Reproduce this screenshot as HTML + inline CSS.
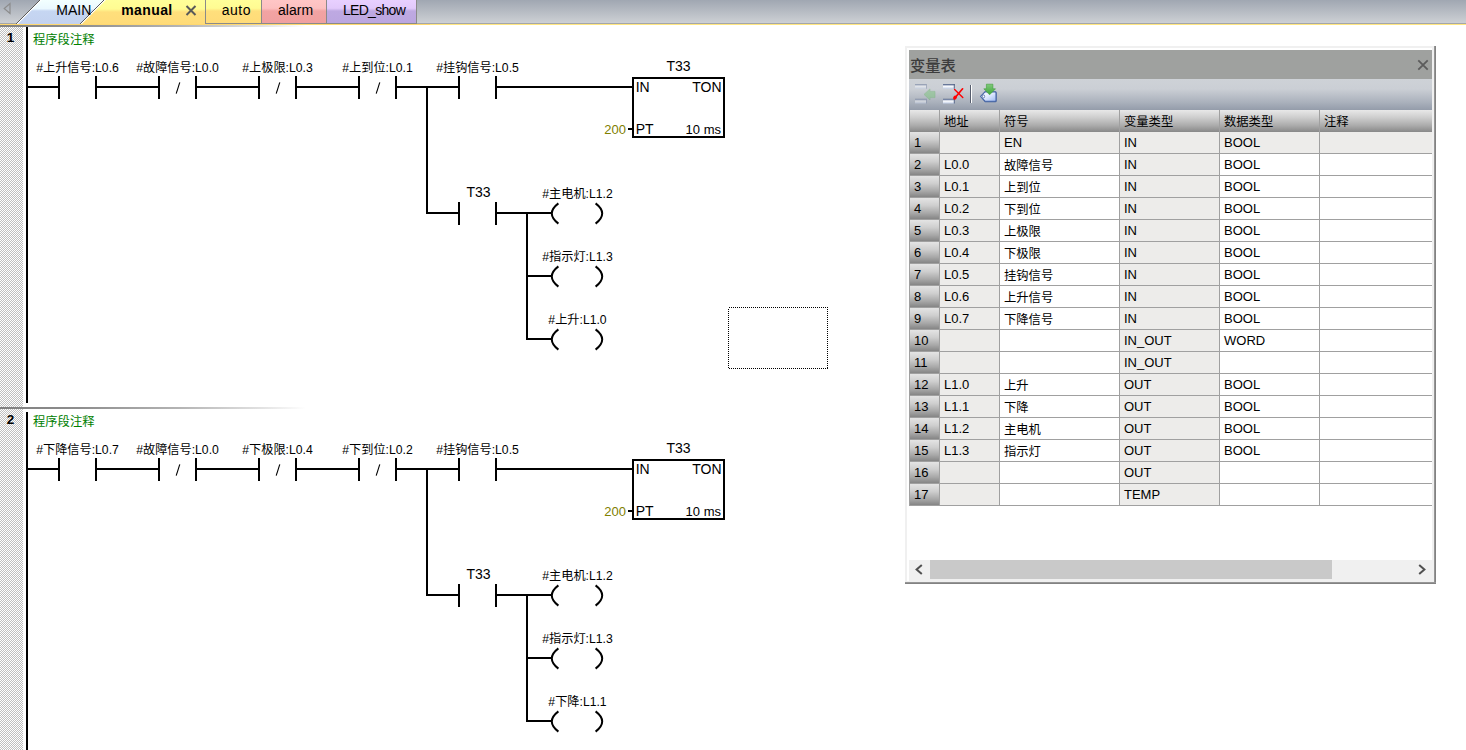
<!DOCTYPE html>
<html lang="zh"><head><meta charset="utf-8"><title>manual</title>
<style>
*{box-sizing:border-box;margin:0;padding:0}
html,body{width:1466px;height:750px;overflow:hidden;background:#fff}
body{position:relative;font-family:"Liberation Sans","Noto Sans CJK SC",sans-serif;font-size:12px;color:#000}
.abs{position:absolute}
#tabbar{left:0;top:0;width:1466px;height:23px;background:linear-gradient(#a0a7b2,#cdd0d4)}
#tabline1{left:0;top:23px;width:1466px;height:1px;background:#a4a6aa}
#tabline2{left:0;top:24px;width:1466px;height:1px;background:#ffe680}
#tabshadow{left:0;top:25px;width:330px;height:2px;background:linear-gradient(90deg,#808080 0,#8e8e8e 80px,#b4b4b4 180px,#e2e2e2 262px,rgba(255,255,255,0) 306px)}
.tab{top:0;height:24px;font-size:13px;line-height:20px;text-align:center;white-space:nowrap}
#margin{left:0;top:27px;width:23px;height:723px;background:conic-gradient(#fff 25%,#c0c0c0 0 50%,#fff 0 75%,#c0c0c0 0) 0 0/2px 2px}
.netno{left:0;width:21px;text-align:center;font-weight:bold;font-size:13.5px;line-height:14px}
.cm{color:#008000;font-size:12.3px;margin-left:-1px;line-height:14px;white-space:nowrap}
svg text{font-family:"Liberation Sans","Noto Sans CJK SC",sans-serif}
#sep{left:0;top:407px;width:330px;height:2px;background:linear-gradient(90deg,#808080 0,#8e8e8e 80px,#b4b4b4 180px,#e2e2e2 262px,rgba(255,255,255,0) 306px)}
/* panel */
#panel{left:905px;top:46px;width:531px;height:538px;background:#f0f0f0}
#pin{left:2px;top:2px;width:525px;height:533px;background:#fff}
#pdr{right:0;top:0;width:2px;height:538px;background:linear-gradient(90deg,#a0a0a0,#787878)}
#pdb{left:0;bottom:0;width:531px;height:2px;background:linear-gradient(#a0a0a0,#787878)}
#ptitle{left:4px;top:4px;width:523px;height:29px;background:#9fa19f;color:#3c3c3c;font-size:15.3px;font-weight:500;line-height:31px;padding-left:1px;white-space:nowrap}
#ptool{left:4px;top:33px;width:523px;height:31px;background:linear-gradient(#ced2d7 0,#cbcfd5 32%,#aab1bc 75%,#949caa 100%)}
#grid{left:4px;top:64px;width:523px;height:396px;background:#a0a0a0}
.c{position:absolute;height:21px;font-size:13px;line-height:21px;padding-left:4px;white-space:nowrap;overflow:hidden}
.h{height:22px;line-height:25px;font-size:12.3px;background:linear-gradient(#e8e8e8 0,#cdcdcd 35%,#acacac 70%,#888 100%)}
.rh{background:linear-gradient(#e4e4e4 0,#cfcfcf 35%,#a8a8a8 72%,#858585 100%);padding-left:4px}
.g{background:#edecea}
.w{background:#fff}
#sb{left:4px;top:514px;width:523px;height:22px;background:#f0f0f0}
#sbt{left:21px;top:0;width:402px;height:19px;background:#c9c9c9}
</style></head>
<body>
<div class="abs" id="tabbar"></div>
<div class="abs" id="tabline1"></div><div class="abs" id="tabline2"></div><div class="abs" id="tabshadow"></div>
<svg class="abs" style="left:0;top:0" width="430" height="25" viewBox="0 0 430 25">
<defs>
<linearGradient id="gM" x1="0" y1="0" x2="0" y2="1"><stop offset="0" stop-color="#f2ffff"/><stop offset=".36" stop-color="#eaf8ff"/><stop offset=".46" stop-color="#c6d6f2"/><stop offset="1" stop-color="#c3d2ef"/></linearGradient>
<linearGradient id="gY" x1="0" y1="0" x2="0" y2="1"><stop offset="0" stop-color="#ffff99"/><stop offset=".36" stop-color="#fffb92"/><stop offset=".48" stop-color="#ffdf7c"/><stop offset="1" stop-color="#ffdb78"/></linearGradient>
<linearGradient id="gR" x1="0" y1="0" x2="0" y2="1"><stop offset="0" stop-color="#ffc6c6"/><stop offset=".36" stop-color="#fdc0c0"/><stop offset=".48" stop-color="#f2a3a3"/><stop offset="1" stop-color="#f0a0a0"/></linearGradient>
<linearGradient id="gP" x1="0" y1="0" x2="0" y2="1"><stop offset="0" stop-color="#e8d0ff"/><stop offset=".36" stop-color="#e2c9fb"/><stop offset=".48" stop-color="#bea9e2"/><stop offset="1" stop-color="#bba6e0"/></linearGradient>
</defs>
<polygon points="41,0 105,0 81,24 17,24" fill="url(#gM)"/>
<polygon points="105,0 205,0 205,25 80,25" fill="url(#gY)"/>
<rect x="205" y="0" width="57" height="23" fill="url(#gY)"/>
<rect x="262" y="0" width="65" height="23" fill="url(#gR)"/>
<rect x="327" y="0" width="90" height="23" fill="url(#gP)"/>
<line x1="41.5" y1="-0.5" x2="17" y2="24" stroke="#fff" stroke-width="1.2"/>
<line x1="40.5" y1="-0.5" x2="16" y2="24" stroke="#5a5a5a" stroke-width="1"/>
<line x1="105.5" y1="-0.5" x2="81" y2="24" stroke="#fff" stroke-width="1.2"/>
<line x1="104.5" y1="-0.5" x2="80" y2="24" stroke="#5a5a5a" stroke-width="1"/>
<g shape-rendering="crispEdges" fill="#8a8a8a">
<rect x="205" y="0" width="1" height="24"/><rect x="261" y="0" width="1" height="24"/><rect x="326" y="0" width="1" height="24"/><rect x="416" y="0" width="1" height="24"/>
<rect x="205" y="23" width="212" height="1"/>
</g>
<rect x="0" y="24" width="430" height="1" fill="#ffd86e"/>
<polygon points="10,3.5 10,13.5 4.2,8.5" fill="none" stroke="#8c8c8c" stroke-width="1.2"/>
<path d="M186.5 6 L195.5 15 M195.5 6 L186.5 15" stroke="#595959" stroke-width="2" fill="none"/>
<g font-size="14" fill="#000">
<text x="73.8" y="15" text-anchor="middle">MAIN</text>
<text x="146.9" y="15" text-anchor="middle" font-weight="bold" letter-spacing="0.4">manual</text>
<text x="236.3" y="15" text-anchor="middle" letter-spacing="0.5">auto</text>
<text x="295.6" y="15" text-anchor="middle">alarm</text>
<text x="374" y="15" text-anchor="middle" letter-spacing="-0.7">LED_show</text>
</g>
</svg>
<div class="abs" id="margin"></div>
<div class="abs netno" style="top:31px">1</div>
<div class="abs netno" style="top:413px">2</div>
<div class="abs cm" style="left:34px;top:33px">程序段注释</div>
<div class="abs cm" style="left:34px;top:415px">程序段注释</div>
<svg class="abs" style="left:0;top:0" width="900" height="750" viewBox="0 0 900 750">
<g shape-rendering="crispEdges" fill="#000"><rect x="26" y="27" width="2" height="376"/><rect x="26" y="412" width="2" height="338"/></g>
<g shape-rendering="crispEdges" fill="#000">
<rect x="28" y="86" width="32" height="2"/>
<rect x="58" y="76" width="2" height="23"/>
<rect x="95" y="76" width="2" height="23"/>
<rect x="97" y="86" width="61" height="2"/>
<rect x="158" y="76" width="2" height="23"/>
<rect x="195" y="76" width="2" height="23"/>
<rect x="197" y="86" width="61" height="2"/>
<rect x="258" y="76" width="2" height="23"/>
<rect x="295" y="76" width="2" height="23"/>
<rect x="297" y="86" width="61" height="2"/>
<rect x="358" y="76" width="2" height="23"/>
<rect x="395" y="76" width="2" height="23"/>
<rect x="397" y="86" width="61" height="2"/>
<rect x="458" y="76" width="2" height="23"/>
<rect x="495" y="76" width="2" height="23"/>
<rect x="497" y="86" width="135" height="2"/>
<rect x="632" y="77" width="93" height="2"/>
<rect x="632" y="136" width="93" height="2"/>
<rect x="632" y="77" width="2" height="61"/>
<rect x="723" y="77" width="2" height="61"/>
<rect x="628" y="128" width="4" height="2"/>
<rect x="426" y="86" width="2" height="128"/>
<rect x="426" y="212" width="34" height="2"/>
<rect x="458" y="202" width="2" height="23"/>
<rect x="495" y="202" width="2" height="23"/>
<rect x="497" y="212" width="55" height="2"/>
<rect x="526" y="212" width="2" height="128"/>
<rect x="528" y="275" width="24" height="2"/>
<rect x="528" y="338" width="24" height="2"/>
</g>
<g fill="none" stroke="#000" stroke-width="2">
<path d="M558.4 203.4 Q545.2 213.5 558.4 223.6"/><path d="M595.6 203.4 Q608.8 213.5 595.6 223.6"/>
<path d="M558.4 266.4 Q545.2 276.5 558.4 286.6"/><path d="M595.6 266.4 Q608.8 276.5 595.6 286.6"/>
<path d="M558.4 329.4 Q545.2 339.5 558.4 349.6"/><path d="M595.6 329.4 Q608.8 339.5 595.6 349.6"/>
</g>
<g stroke="#000" stroke-width="1.1">
<line x1="179.8" y1="82.3" x2="176.2" y2="93.7"/>
<line x1="279.8" y1="82.3" x2="276.2" y2="93.7"/>
<line x1="379.8" y1="82.3" x2="376.2" y2="93.7"/>
</g>
<g font-size="12.2" text-anchor="middle" fill="#000">
<text x="77.5" y="72">#上升信号:L0.6</text>
<text x="177.5" y="72">#故障信号:L0.0</text>
<text x="277.5" y="72">#上极限:L0.3</text>
<text x="377.5" y="72">#上到位:L0.1</text>
<text x="477.5" y="72">#挂钩信号:L0.5</text>
<text x="577.5" y="198">#主电机:L1.2</text>
<text x="577.5" y="261">#指示灯:L1.3</text>
<text x="577.5" y="324">#上升:L1.0</text>
</g>
<g font-size="14" fill="#000">
<text x="678.5" y="71" text-anchor="middle">T33</text>
<text x="478.5" y="197" text-anchor="middle">T33</text>
<text x="635.7" y="92">IN</text>
<text x="721.5" y="92" text-anchor="end">TON</text>
<text x="635.7" y="134">PT</text>
<text x="721" y="134" text-anchor="end" font-size="13">10 ms</text>
<text x="626" y="134" text-anchor="end" font-size="13" fill="#808000">200</text>
</g>
<g shape-rendering="crispEdges" fill="#000">
<rect x="28" y="468" width="32" height="2"/>
<rect x="58" y="458" width="2" height="23"/>
<rect x="95" y="458" width="2" height="23"/>
<rect x="97" y="468" width="61" height="2"/>
<rect x="158" y="458" width="2" height="23"/>
<rect x="195" y="458" width="2" height="23"/>
<rect x="197" y="468" width="61" height="2"/>
<rect x="258" y="458" width="2" height="23"/>
<rect x="295" y="458" width="2" height="23"/>
<rect x="297" y="468" width="61" height="2"/>
<rect x="358" y="458" width="2" height="23"/>
<rect x="395" y="458" width="2" height="23"/>
<rect x="397" y="468" width="61" height="2"/>
<rect x="458" y="458" width="2" height="23"/>
<rect x="495" y="458" width="2" height="23"/>
<rect x="497" y="468" width="135" height="2"/>
<rect x="632" y="459" width="93" height="2"/>
<rect x="632" y="518" width="93" height="2"/>
<rect x="632" y="459" width="2" height="61"/>
<rect x="723" y="459" width="2" height="61"/>
<rect x="628" y="510" width="4" height="2"/>
<rect x="426" y="468" width="2" height="128"/>
<rect x="426" y="594" width="34" height="2"/>
<rect x="458" y="584" width="2" height="23"/>
<rect x="495" y="584" width="2" height="23"/>
<rect x="497" y="594" width="55" height="2"/>
<rect x="526" y="594" width="2" height="128"/>
<rect x="528" y="657" width="24" height="2"/>
<rect x="528" y="720" width="24" height="2"/>
</g>
<g fill="none" stroke="#000" stroke-width="2">
<path d="M558.4 585.4 Q545.2 595.5 558.4 605.6"/><path d="M595.6 585.4 Q608.8 595.5 595.6 605.6"/>
<path d="M558.4 648.4 Q545.2 658.5 558.4 668.6"/><path d="M595.6 648.4 Q608.8 658.5 595.6 668.6"/>
<path d="M558.4 711.4 Q545.2 721.5 558.4 731.6"/><path d="M595.6 711.4 Q608.8 721.5 595.6 731.6"/>
</g>
<g stroke="#000" stroke-width="1.1">
<line x1="179.8" y1="464.3" x2="176.2" y2="475.7"/>
<line x1="279.8" y1="464.3" x2="276.2" y2="475.7"/>
<line x1="379.8" y1="464.3" x2="376.2" y2="475.7"/>
</g>
<g font-size="12.2" text-anchor="middle" fill="#000">
<text x="77.5" y="454">#下降信号:L0.7</text>
<text x="177.5" y="454">#故障信号:L0.0</text>
<text x="277.5" y="454">#下极限:L0.4</text>
<text x="377.5" y="454">#下到位:L0.2</text>
<text x="477.5" y="454">#挂钩信号:L0.5</text>
<text x="577.5" y="580">#主电机:L1.2</text>
<text x="577.5" y="643">#指示灯:L1.3</text>
<text x="577.5" y="706">#下降:L1.1</text>
</g>
<g font-size="14" fill="#000">
<text x="678.5" y="453" text-anchor="middle">T33</text>
<text x="478.5" y="579" text-anchor="middle">T33</text>
<text x="635.7" y="474">IN</text>
<text x="721.5" y="474" text-anchor="end">TON</text>
<text x="635.7" y="516">PT</text>
<text x="721" y="516" text-anchor="end" font-size="13">10 ms</text>
<text x="626" y="516" text-anchor="end" font-size="13" fill="#808000">200</text>
</g>
<rect x="728.5" y="307.5" width="99" height="61" fill="none" stroke="#000" stroke-width="1" stroke-dasharray="1 1" shape-rendering="crispEdges"/>
</svg>
<div class="abs" id="sep"></div>
<div class="abs" id="panel"><div class="abs" id="pin"></div><div class="abs" id="pdr"></div><div class="abs" id="pdb"></div>
<div class="abs" id="ptitle">变量表<svg class="abs" style="left:508px;top:8.5px" width="12" height="12" viewBox="0 0 12 12"><path d="M1.3 1.3 L10.7 10.7 M10.7 1.3 L1.3 10.7" stroke="#5c5c5c" stroke-width="1.8" fill="none"/></svg></div>
<div class="abs" id="ptool"><svg class="abs" style="left:0;top:0" width="100" height="31" viewBox="0 0 100 31">
<defs>
<linearGradient id="bar" x1="0" y1="0" x2="0" y2="1"><stop offset="0" stop-color="#44557a"/><stop offset=".22" stop-color="#8e9cba"/><stop offset=".45" stop-color="#ffffff"/><stop offset="1" stop-color="#c3d0e8"/></linearGradient>
<linearGradient id="tag" x1="0" y1="0" x2="1" y2="1"><stop offset="0" stop-color="#ffffff"/><stop offset=".45" stop-color="#e3ecff"/><stop offset="1" stop-color="#9db9f2"/></linearGradient>
<linearGradient id="ga" x1="0" y1="0" x2="0" y2="1"><stop offset="0" stop-color="#7fca7a"/><stop offset="1" stop-color="#3fa53b"/></linearGradient>
</defs>
<g opacity=".5">
<rect x="6" y="5" width="11.5" height="4.7" fill="url(#bar)"/><rect x="17" y="5" width=".8" height="4.7" fill="#6b7a9c"/>
<rect x="6" y="19.8" width="11.5" height="4.7" fill="url(#bar)"/><rect x="17" y="19.8" width=".8" height="4.7" fill="#6b7a9c"/>
<path d="M15 15.4 L21 9.9 L21 12.4 L26 12.4 L26 18.6 L21 18.6 L21 21 Z" fill="#7cc47c" stroke="#63b263" stroke-width=".6"/>
</g>
<rect x="34" y="5" width="11.5" height="4.7" fill="url(#bar)"/><rect x="44.8" y="5" width=".9" height="4.7" fill="#44557a"/>
<rect x="34" y="19.8" width="11.5" height="4.7" fill="url(#bar)"/><rect x="44.8" y="19.8" width=".9" height="4.7" fill="#44557a"/>
<path d="M53.6 9.8 L45.6 19.3" stroke="#f00" stroke-width="1.7" fill="none" stroke-linecap="round"/>
<path d="M45.6 10.6 L53.8 18.6" stroke="#f00" stroke-width="1.4" fill="none" stroke-linecap="round"/>
<ellipse cx="46" cy="18.6" rx="1.7" ry="2.1" fill="#f00" transform="rotate(40 46 18.6)"/>
<rect x="61" y="6" width="1" height="18" fill="#565d6d"/><rect x="62" y="6" width="1" height="18" fill="#fff"/>
<path d="M71.3 17.6 L76 12.6 L86.4 12.6 Q87.6 12.6 87.6 14 L87.6 22 Q87.6 23.2 86.4 23.2 L76 23.2 Z" fill="#3f5b98"/>
<path d="M71.6 17.3 L76 12.9 L86.2 12.9 Q87 12.9 87 14 L87 21.2 Q87 22.2 86.2 22.2 L76 22.2 Z" fill="url(#tag)" stroke="#4a69a8" stroke-width="1.1"/>
<ellipse cx="74.6" cy="17.4" rx="1.1" ry="1.5" fill="#fff" stroke="#3f5b98" stroke-width=".7"/>
<path d="M77.4 5.2 L83.9 5.2 L83.9 9.8 L86.5 9.8 L80.6 15.8 L74.8 9.8 L77.4 9.8 Z" fill="url(#ga)" stroke="#3f9e3b" stroke-width=".6"/>
</svg></div>
<div class="abs" id="grid">
<div class="c h" style="left:1px;top:0;width:29px"></div>
<div class="c h" style="left:31px;top:0;width:59px">地址</div>
<div class="c h" style="left:91px;top:0;width:119px">符号</div>
<div class="c h" style="left:211px;top:0;width:99px">变量类型</div>
<div class="c h" style="left:311px;top:0;width:99px">数据类型</div>
<div class="c h" style="left:411px;top:0;width:112px">注释</div>
<div class="c rh" style="left:1px;top:22px;width:29px">1</div>
<div class="c g" style="left:31px;top:22px;width:59px"></div>
<div class="c g" style="left:91px;top:22px;width:119px">EN</div>
<div class="c g" style="left:211px;top:22px;width:99px">IN</div>
<div class="c g" style="left:311px;top:22px;width:99px">BOOL</div>
<div class="c g" style="left:411px;top:22px;width:112px"></div>
<div class="c rh" style="left:1px;top:44px;width:29px">2</div>
<div class="c g" style="left:31px;top:44px;width:59px">L0.0</div>
<div class="c w" style="left:91px;top:44px;width:119px;font-size:12.3px;line-height:25px">故障信号</div>
<div class="c g" style="left:211px;top:44px;width:99px">IN</div>
<div class="c w" style="left:311px;top:44px;width:99px">BOOL</div>
<div class="c w" style="left:411px;top:44px;width:112px"></div>
<div class="c rh" style="left:1px;top:66px;width:29px">3</div>
<div class="c g" style="left:31px;top:66px;width:59px">L0.1</div>
<div class="c w" style="left:91px;top:66px;width:119px;font-size:12.3px;line-height:25px">上到位</div>
<div class="c g" style="left:211px;top:66px;width:99px">IN</div>
<div class="c w" style="left:311px;top:66px;width:99px">BOOL</div>
<div class="c w" style="left:411px;top:66px;width:112px"></div>
<div class="c rh" style="left:1px;top:88px;width:29px">4</div>
<div class="c g" style="left:31px;top:88px;width:59px">L0.2</div>
<div class="c w" style="left:91px;top:88px;width:119px;font-size:12.3px;line-height:25px">下到位</div>
<div class="c g" style="left:211px;top:88px;width:99px">IN</div>
<div class="c w" style="left:311px;top:88px;width:99px">BOOL</div>
<div class="c w" style="left:411px;top:88px;width:112px"></div>
<div class="c rh" style="left:1px;top:110px;width:29px">5</div>
<div class="c g" style="left:31px;top:110px;width:59px">L0.3</div>
<div class="c w" style="left:91px;top:110px;width:119px;font-size:12.3px;line-height:25px">上极限</div>
<div class="c g" style="left:211px;top:110px;width:99px">IN</div>
<div class="c w" style="left:311px;top:110px;width:99px">BOOL</div>
<div class="c w" style="left:411px;top:110px;width:112px"></div>
<div class="c rh" style="left:1px;top:132px;width:29px">6</div>
<div class="c g" style="left:31px;top:132px;width:59px">L0.4</div>
<div class="c w" style="left:91px;top:132px;width:119px;font-size:12.3px;line-height:25px">下极限</div>
<div class="c g" style="left:211px;top:132px;width:99px">IN</div>
<div class="c w" style="left:311px;top:132px;width:99px">BOOL</div>
<div class="c w" style="left:411px;top:132px;width:112px"></div>
<div class="c rh" style="left:1px;top:154px;width:29px">7</div>
<div class="c g" style="left:31px;top:154px;width:59px">L0.5</div>
<div class="c w" style="left:91px;top:154px;width:119px;font-size:12.3px;line-height:25px">挂钩信号</div>
<div class="c g" style="left:211px;top:154px;width:99px">IN</div>
<div class="c w" style="left:311px;top:154px;width:99px">BOOL</div>
<div class="c w" style="left:411px;top:154px;width:112px"></div>
<div class="c rh" style="left:1px;top:176px;width:29px">8</div>
<div class="c g" style="left:31px;top:176px;width:59px">L0.6</div>
<div class="c w" style="left:91px;top:176px;width:119px;font-size:12.3px;line-height:25px">上升信号</div>
<div class="c g" style="left:211px;top:176px;width:99px">IN</div>
<div class="c w" style="left:311px;top:176px;width:99px">BOOL</div>
<div class="c w" style="left:411px;top:176px;width:112px"></div>
<div class="c rh" style="left:1px;top:198px;width:29px">9</div>
<div class="c g" style="left:31px;top:198px;width:59px">L0.7</div>
<div class="c w" style="left:91px;top:198px;width:119px;font-size:12.3px;line-height:25px">下降信号</div>
<div class="c g" style="left:211px;top:198px;width:99px">IN</div>
<div class="c w" style="left:311px;top:198px;width:99px">BOOL</div>
<div class="c w" style="left:411px;top:198px;width:112px"></div>
<div class="c rh" style="left:1px;top:220px;width:29px">10</div>
<div class="c g" style="left:31px;top:220px;width:59px"></div>
<div class="c w" style="left:91px;top:220px;width:119px"></div>
<div class="c g" style="left:211px;top:220px;width:99px">IN_OUT</div>
<div class="c w" style="left:311px;top:220px;width:99px">WORD</div>
<div class="c w" style="left:411px;top:220px;width:112px"></div>
<div class="c rh" style="left:1px;top:242px;width:29px">11</div>
<div class="c g" style="left:31px;top:242px;width:59px"></div>
<div class="c w" style="left:91px;top:242px;width:119px"></div>
<div class="c g" style="left:211px;top:242px;width:99px">IN_OUT</div>
<div class="c w" style="left:311px;top:242px;width:99px"></div>
<div class="c w" style="left:411px;top:242px;width:112px"></div>
<div class="c rh" style="left:1px;top:264px;width:29px">12</div>
<div class="c g" style="left:31px;top:264px;width:59px">L1.0</div>
<div class="c w" style="left:91px;top:264px;width:119px;font-size:12.3px;line-height:25px">上升</div>
<div class="c g" style="left:211px;top:264px;width:99px">OUT</div>
<div class="c w" style="left:311px;top:264px;width:99px">BOOL</div>
<div class="c w" style="left:411px;top:264px;width:112px"></div>
<div class="c rh" style="left:1px;top:286px;width:29px">13</div>
<div class="c g" style="left:31px;top:286px;width:59px">L1.1</div>
<div class="c w" style="left:91px;top:286px;width:119px;font-size:12.3px;line-height:25px">下降</div>
<div class="c g" style="left:211px;top:286px;width:99px">OUT</div>
<div class="c w" style="left:311px;top:286px;width:99px">BOOL</div>
<div class="c w" style="left:411px;top:286px;width:112px"></div>
<div class="c rh" style="left:1px;top:308px;width:29px">14</div>
<div class="c g" style="left:31px;top:308px;width:59px">L1.2</div>
<div class="c w" style="left:91px;top:308px;width:119px;font-size:12.3px;line-height:25px">主电机</div>
<div class="c g" style="left:211px;top:308px;width:99px">OUT</div>
<div class="c w" style="left:311px;top:308px;width:99px">BOOL</div>
<div class="c w" style="left:411px;top:308px;width:112px"></div>
<div class="c rh" style="left:1px;top:330px;width:29px">15</div>
<div class="c g" style="left:31px;top:330px;width:59px">L1.3</div>
<div class="c w" style="left:91px;top:330px;width:119px;font-size:12.3px;line-height:25px">指示灯</div>
<div class="c g" style="left:211px;top:330px;width:99px">OUT</div>
<div class="c w" style="left:311px;top:330px;width:99px">BOOL</div>
<div class="c w" style="left:411px;top:330px;width:112px"></div>
<div class="c rh" style="left:1px;top:352px;width:29px">16</div>
<div class="c g" style="left:31px;top:352px;width:59px"></div>
<div class="c w" style="left:91px;top:352px;width:119px"></div>
<div class="c g" style="left:211px;top:352px;width:99px">OUT</div>
<div class="c w" style="left:311px;top:352px;width:99px"></div>
<div class="c w" style="left:411px;top:352px;width:112px"></div>
<div class="c rh" style="left:1px;top:374px;width:29px">17</div>
<div class="c g" style="left:31px;top:374px;width:59px"></div>
<div class="c w" style="left:91px;top:374px;width:119px"></div>
<div class="c g" style="left:211px;top:374px;width:99px">TEMP</div>
<div class="c w" style="left:311px;top:374px;width:99px"></div>
<div class="c w" style="left:411px;top:374px;width:112px"></div>
</div>
<div class="abs" id="sb"><div class="abs" id="sbt"></div><svg class="abs" style="left:5px;top:4px" width="10" height="11" viewBox="0 0 10 11"><path d="M7.8 1 L2.6 5.5 L7.8 10" fill="none" stroke="#505050" stroke-width="2"/></svg><svg class="abs" style="left:508px;top:4px" width="10" height="11" viewBox="0 0 10 11"><path d="M2.2 1 L7.4 5.5 L2.2 10" fill="none" stroke="#505050" stroke-width="2"/></svg></div>
</div>
</body></html>
